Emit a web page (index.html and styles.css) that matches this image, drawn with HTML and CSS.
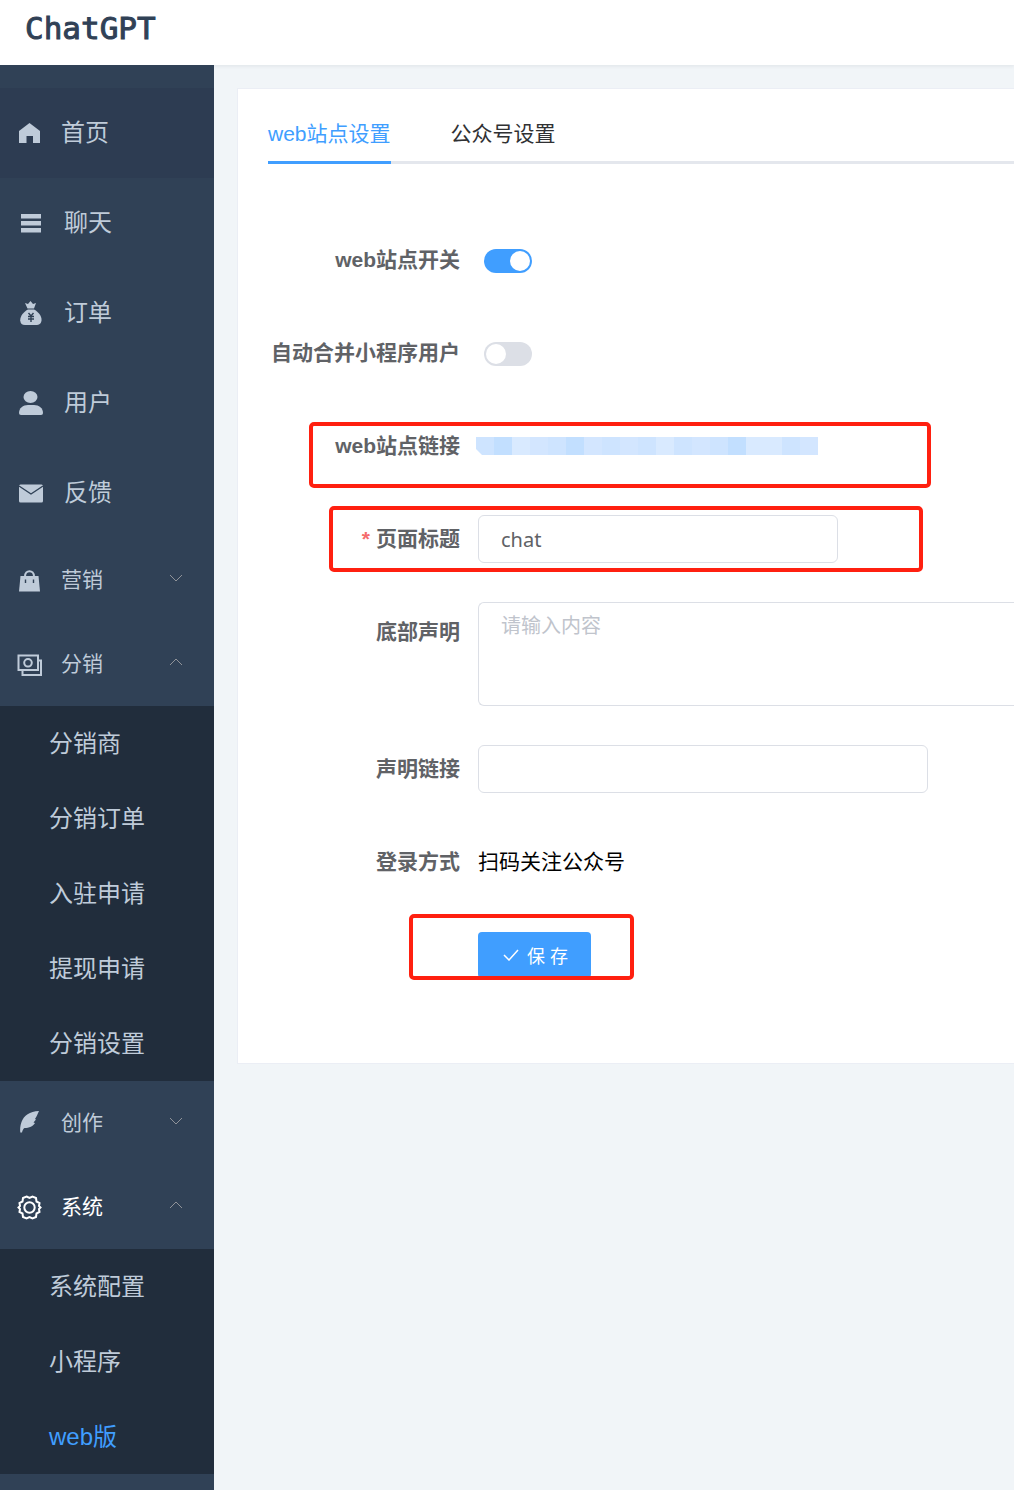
FILE: index.html
```html
<!DOCTYPE html>
<html lang="zh-CN">
<head>
  <meta charset="UTF-8">
  <title>ChatGPT</title>
  <meta name="viewport" content="width=device-width, initial-scale=1.0">
  <link rel="stylesheet" href="styles.css">
</head>
<body>

  <header class="header">
    <div class="logo">ChatGPT</div>
  </header>

  <div class="layout">
    <nav class="sidebar">
      <a class="menu-item home" href="#">
        <svg class="icon" viewBox="0 0 24 24"><path d="M11.500 2 22 10V22H15V15H8.500V22H1V10Z"/></svg>
        <span>首页</span>
      </a>
      <a class="menu-item" href="#">
        <svg class="icon" viewBox="0 0 24 24"><path d="M2 3H22V7.500H2ZM2 10H22V14.500H2ZM2 17H22V21.500H2Z"/></svg>
        <span>聊天</span>
      </a>
      <a class="menu-item" href="#">
        <svg class="icon" viewBox="0 0 24 24">
          <path d="M6 2 9 3 11.500 0 14 3 17 2 15 7.500H8.500Z"/>
          <path d="M9 8.500H15C19 10.500 23 15 22.500 19.500C22 23 20 24 17 24H6C3 24 1.500 22.500 1.200 19.500C1 15 5 10.500 9 8.500Z"/>
          <path class="cut" d="M9.500 12 12 15 14.500 12M9 15.500H15M9 18H15M12 15V21"/>
        </svg>
        <span>订单</span>
      </a>
      <a class="menu-item" href="#">
        <svg class="icon" viewBox="0 0 24 24"><ellipse cx="11.500" cy="6" rx="7" ry="6"/><path d="M0 22C0 17 4 14 9 14H15C20 14 24 17 24 22Q24 24 22 24H2Q0 24 0 22Z"/></svg>
        <span>用户</span>
      </a>
      <a class="menu-item" href="#">
        <svg class="icon" viewBox="0 0 24 24"><rect y="3.500" width="24" height="18" rx="1.500"/><path class="cut" d="M0 5 12 13 24 5"/></svg>
        <span>反馈</span>
      </a>

      <button class="menu-group" type="button">
        <svg class="icon" viewBox="0 0 24 24"><path d="M2.500 8H20.500L22 23.500H1Z"/><path class="line" d="M7 8.500C7 1.500 16 1.500 16 8.500"/><path class="cut" d="M7.500 11.500V15M15.500 11.500V15"/></svg>
        <span>营销</span>
        <svg class="arrow" viewBox="0 0 14 8"><path d="M1 1 7 7 13 1"/></svg>
      </button>

      <button class="menu-group" type="button" aria-expanded="true">
        <svg class="icon" viewBox="0 0 24 24"><path class="line" d="M.5 3.500H20V18H.5ZM4.500 18V23H23V8.500H20"/><circle class="line" cx="10" cy="10.800" r="3.800"/></svg>
        <span>分销</span>
        <svg class="arrow" viewBox="0 0 14 8"><path d="M1 7 7 1 13 7"/></svg>
      </button>
      <div class="submenu">
        <a href="#">分销商</a>
        <a href="#">分销订单</a>
        <a href="#">入驻申请</a>
        <a href="#">提现申请</a>
        <a href="#">分销设置</a>
      </div>

      <button class="menu-group" type="button">
        <svg class="icon" viewBox="0 0 24 24"><path d="M21 0C11.500 .5 6 4.500 3.500 11C2 15 2 19 2.300 21.500H4C4.500 19.500 5 18 6.500 17C11 17 15.500 15 17 12L15.500 11.500L18 8.500L17 8C18.500 6 19.500 3 21 0Z"/></svg>
        <span>创作</span>
        <svg class="arrow" viewBox="0 0 14 8"><path d="M1 1 7 7 13 1"/></svg>
      </button>

      <button class="menu-group active" type="button" aria-expanded="true">
        <svg class="icon" viewBox="0 0 24 24"><path class="line" d="M8.500 1.500 11.500 3 14.500 1.500 18 3 18.500 6.500 21.500 8 21 11 22.500 12.500 21 14 21.500 17 18.500 18.500 18 22 14.500 23.500 11.500 22 8.500 23.500 5 22 4.500 18.500 1.500 17 2 14 .5 12.500 2 11 1.500 8 4.500 6.500 5 3Z"/><circle class="line" cx="11.500" cy="12.500" r="5.200"/></svg>
        <span>系统</span>
        <svg class="arrow" viewBox="0 0 14 8"><path d="M1 7 7 1 13 7"/></svg>
      </button>
      <div class="submenu">
        <a href="#">系统配置</a>
        <a href="#">小程序</a>
        <a class="current" href="#">web版</a>
      </div>
    </nav>

    <main class="main">
      <section class="card">
        <div class="tabs">
          <a class="tab active" href="#">web站点设置</a>
          <a class="tab" href="#">公众号设置</a>
        </div>

        <form class="form">
          <div class="row">
            <label class="label" for="site-on">web站点开关</label>
            <input class="switch" type="checkbox" id="site-on" checked>
          </div>
          <div class="row">
            <label class="label" for="merge">自动合并小程序用户</label>
            <input class="switch" type="checkbox" id="merge">
          </div>
          <div class="row">
            <span class="label">web站点链接</span>
            <svg class="mosaic" viewBox="0 0 342 18">
              <path fill="#cee4ff" d="M0 0H342V18H6L0 12Z"/>
              <path fill="#c2dfff" d="M18 0h18v18H18ZM90 0h18v18H90ZM252 0h18v18H252Z"/>
              <path fill="#d9eaff" d="M36 0h18v18H36ZM180 0h18v18H180ZM270 0h36v18H270Z"/>
              <path fill="#d3e6ff" d="M54 0h18v18H54ZM108 0h18v18H108ZM144 0h18v18H144ZM216 0h18v18H216ZM324 0h18v18H324Z"/>
            </svg>
            <div class="mark mark-link"></div>
          </div>
          <div class="row">
            <label class="label required" for="title">页面标题</label>
            <input class="input" type="text" id="title" value="chat">
            <div class="mark mark-title"></div>
          </div>
          <div class="row row-area">
            <label class="label" for="notice">底部声明</label>
            <textarea class="textarea" id="notice" placeholder="请输入内容"></textarea>
          </div>
          <div class="row">
            <label class="label" for="notice-link">声明链接</label>
            <input class="input wide" type="text" id="notice-link">
          </div>
          <div class="row">
            <span class="label">登录方式</span>
            <span class="value">扫码关注公众号</span>
          </div>
          <div class="row">
            <span class="label"></span>
            <button class="save" type="button">
              <svg class="check" viewBox="0 0 16 12"><path d="M1 6 6 11 15 1"/></svg>
              <span>保 存</span>
            </button>
            <div class="mark mark-save"></div>
          </div>
        </form>
      </section>
    </main>
  </div>

</body>
</html>
```
FILE: styles.css
```css
:root {
  --blue: #409eff;
  --menu-bg: #304156;
  --submenu-bg: #212d3c;
  --menu-text: #bfcbd9;
  --border: #dcdfe6;
}

* {
  box-sizing: border-box;
}

body {
  margin: 0;
  min-height: 100vh;
  display: flex;
  flex-direction: column;
  font-family: "Liberation Sans", "Noto Sans CJK SC", sans-serif;
  font-size: 21px;
  color: #000;
  background: #f1f5f8;
}

a {
  text-decoration: none;
}

.header {
  height: 65px;
  padding: 10px 25px;
  background: #fff;
  box-shadow: 0 1px 4px rgba(0, 21, 41, 0.08);
}

.logo {
  font-family: "DejaVu Sans Mono", monospace;
  font-size: 31px;
  line-height: 36px;
  color: #304156;
  -webkit-text-stroke: 1px #304156;
}

.layout {
  flex: 1;
  display: flex;
}

/* sidebar */
.sidebar {
  position: relative;
  flex: 0 0 214px;
  padding-top: 23px;
  background: var(--menu-bg);
}

.menu-item,
.menu-group {
  display: flex;
  align-items: center;
  width: 100%;
  color: var(--menu-text);
}

.menu-item {
  height: 90px;
  padding-left: 19px;
  gap: 21px;
  font-size: 24px;
  line-height: 90px;
}

.menu-item.home {
  padding-left: 18px;
  gap: 19px;
  background: #2d3c52;
}

.menu-group {
  height: 84px;
  padding: 0 31px 0 18px;
  gap: 19px;
  border: none;
  background: none;
  font-family: inherit;
  font-size: 21px;
  line-height: 84px;
  cursor: pointer;
}

.menu-group.active {
  color: #fff;
}

.icon {
  width: 24px;
  height: 24px;
  fill: currentColor;
  overflow: visible;
}

.icon .line {
  fill: none;
  stroke: currentColor;
  stroke-width: 2;
}

.icon .cut {
  fill: none;
  stroke: var(--menu-bg);
  stroke-width: 1.4;
}

.arrow {
  width: 14px;
  height: 8px;
  margin: 0 0 4px auto;
  fill: none;
  stroke: #909399;
}

.submenu {
  background: var(--submenu-bg);
}

.submenu a {
  display: block;
  padding-left: 49px;
  font-size: 24px;
  line-height: 75px;
  color: var(--menu-text);
}

.submenu a.current {
  color: var(--blue);
}

/* content */
.main {
  flex: 1;
  min-width: 0;
  padding: 23px 0 0 23px;
}

.card {
  padding: 15px 0 78px 30px;
  border: 1px solid #ebeef5;
  border-right: none;
  background: #fff;
}

.tabs {
  display: flex;
  gap: 60px;
  border-bottom: 3px solid #e4e7ed;
}

.tab {
  margin-bottom: -3px;
  padding-top: 2px;
  border-bottom: 3px solid transparent;
  line-height: 55px;
  color: #303133;
}

.tab.active {
  color: var(--blue);
  border-color: var(--blue);
}

.form {
  display: flex;
  flex-direction: column;
  gap: 33px;
  padding-top: 66px;
}

.row {
  position: relative;
  display: flex;
  align-items: center;
  height: 60px;
}

.row-area {
  align-items: flex-start;
  height: 104px;
}

.label,
.value {
  line-height: 60px;
}

.label {
  flex: 0 0 210px;
  padding-right: 18px;
  font-weight: bold;
  text-align: right;
  color: #606266;
}

.required::before {
  content: "*";
  margin-right: 6px;
  color: #f56c6c;
}

.switch {
  appearance: none;
  display: flex;
  width: 48px;
  height: 24px;
  margin: 2px 0 0 6px;
  padding: 2px;
  border-radius: 12px;
  background: var(--border);
}

.switch::before {
  content: "";
  width: 20px;
  height: 20px;
  border-radius: 50%;
  background: #fff;
}

.switch:checked {
  justify-content: flex-end;
  background: var(--blue);
}

.input,
.textarea {
  border: 1px solid var(--border);
  border-radius: 6px;
  background: #fff;
  color: #606266;
  font-family: "Noto Sans", "Noto Sans CJK SC", sans-serif;
  font-size: 20px;
}

.input {
  width: 360px;
  height: 48px;
  padding: 0 22px;
}

.input.wide {
  width: 450px;
}

.textarea {
  flex: 1;
  height: 104px;
  padding: 8px 22px;
  border-right: none;
  border-radius: 6px 0 0 6px;
  line-height: 30px;
  resize: none;
}

.textarea::placeholder {
  color: #c0c4cc;
}

.mosaic {
  width: 342px;
  height: 18px;
  margin-left: -2px;
}

.save {
  display: flex;
  align-items: center;
  gap: 8px;
  height: 46px;
  padding: 0 23px 0 25px;
  border: none;
  border-radius: 4px;
  background: var(--blue);
  color: #fff;
  font-family: inherit;
  font-size: 18px;
}

.check {
  width: 16px;
  height: 12px;
  fill: none;
  stroke: #fff;
  stroke-width: 1.5;
}

/* red frames drawn over the form */
.mark {
  position: absolute;
  height: 66px;
  border: 4px solid #ff2010;
  border-radius: 5px;
  pointer-events: none;
}

.mark-link {
  top: 6px;
  left: 41px;
  width: 622px;
}

.mark-title {
  top: -3px;
  left: 61px;
  width: 594px;
}

.mark-save {
  top: -11px;
  left: 141px;
  width: 225px;
}
```
